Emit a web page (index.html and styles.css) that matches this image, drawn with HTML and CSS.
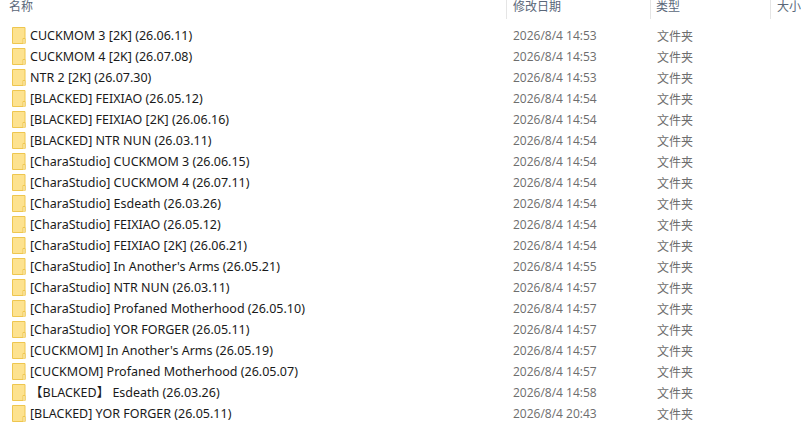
FILE: index.html
```html
<!DOCTYPE html>
<html lang="zh-CN">

<head>
    <meta charset="UTF-8">
    <title>文件夹</title>
    <link rel="stylesheet" href="styles.css">
</head>

<body>
    <svg class="defs" width="0" height="0">
        <symbol id="folder" viewBox="0 0 14 17">
            <path d="M.5.5h12.5v16H.5z" fill="#fde28f" stroke="#eec64f" />
            <path d="M11 16.5v-5h2v5" fill="#fff6d6" stroke="#eec64f" />
        </symbol>
    </svg>

    <div class="header">
        <div class="head-cell name-col">名称</div>
        <div class="head-cell date-col">修改日期</div>
        <div class="head-cell type-col">类型</div>
        <div class="head-cell size-col">大小</div>
    </div>

    <ul class="files" id="files"></ul>

    <script>
        const rows = [
            ["CUCKMOM 3 [2K] (26.06.11)", "14:53"],
            ["CUCKMOM 4 [2K] (26.07.08)", "14:53"],
            ["NTR 2 [2K] (26.07.30)", "14:53"],
            ["[BLACKED] FEIXIAO (26.05.12)", "14:54"],
            ["[BLACKED] FEIXIAO [2K] (26.06.16)", "14:54"],
            ["[BLACKED] NTR NUN (26.03.11)", "14:54"],
            ["[CharaStudio] CUCKMOM 3 (26.06.15)", "14:54"],
            ["[CharaStudio] CUCKMOM 4 (26.07.11)", "14:54"],
            ["[CharaStudio] Esdeath (26.03.26)", "14:54"],
            ["[CharaStudio] FEIXIAO (26.05.12)", "14:54"],
            ["[CharaStudio] FEIXIAO [2K] (26.06.21)", "14:54"],
            ["[CharaStudio] In Another's Arms (26.05.21)", "14:55"],
            ["[CharaStudio] NTR NUN (26.03.11)", "14:57"],
            ["[CharaStudio] Profaned Motherhood (26.05.10)", "14:57"],
            ["[CharaStudio] YOR FORGER (26.05.11)", "14:57"],
            ["[CUCKMOM] In Another's Arms (26.05.19)", "14:57"],
            ["[CUCKMOM] Profaned Motherhood (26.05.07)", "14:57"],
            ["【BLACKED】 Esdeath (26.03.26)", "14:58"],
            ["[BLACKED] YOR FORGER (26.05.11)", "20:43"]
        ];

        // Build one list row per folder
        const list = document.getElementById("files");
        rows.forEach(function (row) {
            const li = document.createElement("li");
            li.className = "file";
            li.innerHTML =
                '<div class="name-col file-name"><svg class="icon"><use href="#folder"></use></svg><span></span></div>' +
                '<div class="date-col file-meta">2026/8/4 ' + row[1] + '</div>' +
                '<div class="type-col file-meta">文件夹</div>';
            li.querySelector("span").textContent = row[0];
            list.appendChild(li);
        });
    </script>
</body>

</html>
```
FILE: styles.css
```css
/* explorer details view */

body {
    margin: 0;
    height: 438px;
    overflow: hidden;
    background: #fff;
    font-family: "Open Sans", "Noto Sans CJK SC", sans-serif;
    font-size: 12px;
}

.defs {
    display: block;
    height: 0;
}

/* column header */

.header {
    display: flex;
    height: 19px;
    overflow: hidden;
}

.head-cell {
    box-sizing: border-box;
    height: 19px;
    line-height: 11px;
    color: #5a6779;
    border-right: 1px solid #e5e5e5;
    font-family: "Noto Sans CJK SC", sans-serif;
}

.header .name-col {
    width: 507px;
    padding-left: 9px;
}

.header .date-col {
    width: 144px;
    padding-left: 6px;
}

.header .type-col {
    width: 120px;
    padding-left: 5px;
}

.header .size-col {
    flex: 1;
    padding-left: 6px;
    border-right: 0;
}

/* rows */

.files {
    list-style: none;
    margin: 6px 0 0;
    padding: 0;
}

.file {
    display: flex;
    height: 21px;
    line-height: 21px;
}

.file-name {
    display: flex;
    align-items: center;
    gap: 4px;
    width: 513px;
    box-sizing: border-box;
    padding-left: 12px;
    color: #1a1a1a;
    white-space: nowrap;
    font-family: "Noto Sans", "Noto Sans CJK SC", sans-serif;
    font-size: 12.5px;
}

.icon {
    width: 14px;
    height: 17px;
    flex: none;
}

.file-meta {
    color: #6d6d6d;
}

.file .date-col {
    width: 144px;
}

.file .type-col {
    font-family: "Noto Sans CJK SC", sans-serif;
}
```
